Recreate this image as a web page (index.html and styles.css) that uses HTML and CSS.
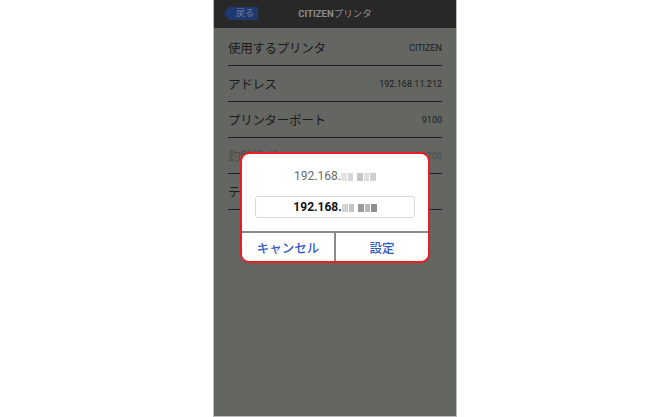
FILE: index.html
```html
<!DOCTYPE html>
<html lang="ja">
<head>
<meta charset="utf-8">
<title>CITIZENプリンタ</title>
<link rel="stylesheet" href="styles.css">
</head>
<body>
<div class="stage">
  <div class="phone">
    <header class="appbar">
      <span class="back">戻る</span>
      <span class="title"><b>CITIZEN</b>プリンタ</span>
    </header>
    <ul class="settings">
      <li class="row"><span class="label">使用するプリンタ</span><span class="value">CITIZEN</span></li>
      <li class="row"><span class="label">アドレス</span><span class="value">192.168.11.212</span></li>
      <li class="row"><span class="label">プリンターポート</span><span class="value">9100</span></li>
      <li class="row disabled"><span class="label">釣銭機ポート</span><span class="value">9200</span></li>
      <li class="row"><span class="label">テスト印刷</span><span class="value"></span></li>
    </ul>
    <div class="dialog">
      <div class="message">192.168.<span class="blur"><i class="b1"></i><i class="b2"></i><i class="b3"></i><i class="b4"></i><i class="b5"></i></span></div>
      <div class="field">192.168.<span class="blur dark"><i class="b1"></i><i class="b2"></i><i class="b3"></i><i class="b4"></i><i class="b5"></i></span></div>
      <div class="actions">
        <span class="btn">キャンセル</span>
        <span class="btn">設定</span>
      </div>
    </div>
  </div>
</div>
</body>
</html>
```
FILE: styles.css
```css
html, body {
  margin: 0;
  padding: 0;
  background: #ffffff;
}
body {
  font-family: Roboto, "Noto Sans CJK JP", "Noto Sans", sans-serif;
}
.stage {
  width: 670px;
  height: 417px;
  display: flex;
  justify-content: center;
  overflow: hidden;
}
.phone {
  position: relative;
  width: 242px;
  height: 416px;
  border: 1px solid #bdbdbd;
  border-top: none;
  background: #646662;
}
.appbar {
  height: 28px;
  background: #282828;
  position: relative;
  display: flex;
  align-items: center;
  justify-content: center;
}
.back {
  position: absolute;
  left: 10px;
  top: 7px;
  height: 13px;
  width: 34px;
  box-sizing: border-box;
  padding-left: 12px;
  background: #1f3970;
  clip-path: polygon(0 50%, 5px 0, 100% 0, 100% 100%, 5px 100%);
  color: #6f7ea3;
  font-size: 9px;
  line-height: 13px;
}
.title {
  color: #8e8e8e;
  font-size: 9.5px;
  line-height: 1;
}
.title b {
  font-weight: 700;
}
.settings {
  list-style: none;
  margin: 0;
  padding: 2px 14px 0;
}
.row {
  height: 35px;
  border-bottom: 1px solid #1e1e1e;
  display: flex;
  align-items: center;
  justify-content: space-between;
}
.label {
  font-size: 12.5px;
  letter-spacing: -0.3px;
  color: #1a1a1a;
  font-family: "Noto Sans CJK JP", sans-serif;
}
.value {
  font-size: 9px;
  color: #1c1c1c;
}
.disabled .label,
.disabled .value {
  color: #4a4c48;
}
.dialog {
  position: absolute;
  left: 26px;
  top: 152px;
  width: 186px;
  height: 107px;
  border: 2px solid #ec1c24;
  border-radius: 9px;
  background: #ffffff;
  display: flex;
  flex-direction: column;
  overflow: hidden;
}
.message {
  margin-top: 14px;
  height: 16px;
  line-height: 16px;
  text-align: center;
  font-size: 12px;
  color: #6a6a6a;
}
.field {
  margin: 12px 13px 0;
  height: 20px;
  border: 1px solid #dadada;
  border-radius: 3px;
  text-align: center;
  line-height: 20px;
  font-size: 12px;
  font-weight: 700;
  color: #111;
}
.blur {
  display: inline-flex;
  align-items: center;
  gap: 1px;
  height: 8px;
  vertical-align: -1px;
}
.blur i {
  display: block;
  height: 8px;
}
.blur .b1 { width: 6px; background: #e3e3e3; }
.blur .b2 { width: 5px; background: #d8d8d8; margin-right: 3px; }
.blur .b3 { width: 6px; background: #c4c4c4; }
.blur .b4 { width: 5px; background: #dedede; }
.blur .b5 { width: 6px; background: #cfcfcf; }
.blur.dark .b1 { background: #d4d4d4; }
.blur.dark .b2 { background: #c6c6c6; }
.blur.dark .b3 { background: #9a9a9a; }
.blur.dark .b4 { background: #b8b8b8; }
.blur.dark .b5 { background: #8f8f8f; }
.actions {
  margin-top: 13px;
  flex: 1;
  display: flex;
  border-top: 2px solid #8a8a8a;
}
.btn {
  flex: 1;
  display: flex;
  align-items: center;
  justify-content: center;
  font-family: "Noto Sans CJK JP", sans-serif;
  font-size: 12.5px;
  font-weight: 500;
  color: #3358c4;
}
.btn + .btn {
  border-left: 2px solid #8a8a8a;
}
```
